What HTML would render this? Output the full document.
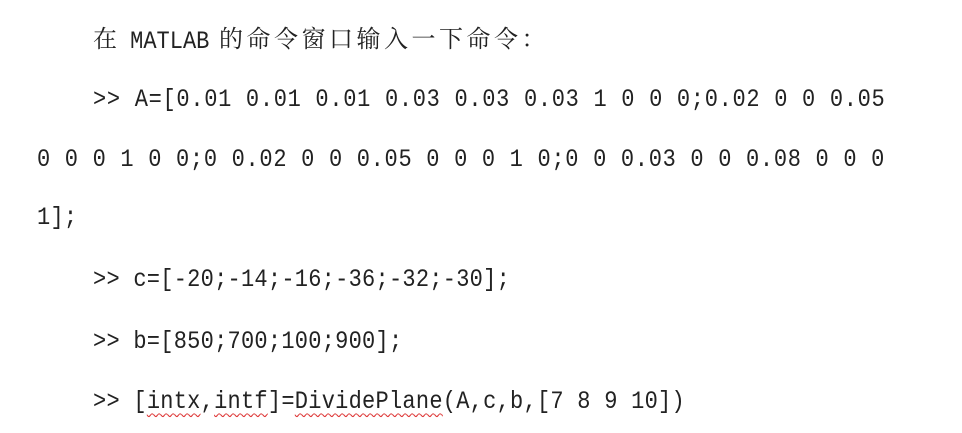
<!DOCTYPE html>
<html><head><meta charset="utf-8"><style>
body{margin:0;width:962px;height:433px;background:#fff;overflow:hidden;position:relative}
.l{position:absolute;white-space:pre;line-height:30px;color:#222;font-family:"Liberation Mono","Noto Serif CJK SC",monospace;font-size:22px;letter-spacing:0.25px;transform:scaleY(1.15);transform-origin:left center}
.cn{font-family:"Noto Serif CJK SC","Liberation Serif",serif;font-size:24px;letter-spacing:3.5px;transform:none}
.j{letter-spacing:0.7px}
.w{text-decoration:underline wavy #d33;text-decoration-thickness:1px;text-underline-offset:4px}
</style></head><body>
<div class="l cn" style="left:93px;top:22px">在 <span style="font-family:'Liberation Mono',monospace;font-size:22px;letter-spacing:0;display:inline-block;transform:scaleY(1.15)">MATLAB</span> 的命令窗口输入一下命令：</div>
<div class="l j" style="left:93px;top:85px">&gt;&gt; A=[0.01 0.01 0.01 0.03 0.03 0.03 1 0 0 0;0.02 0 0 0.05</div>
<div class="l j" style="left:37px;top:145px">0 0 0 1 0 0;0 0.02 0 0 0.05 0 0 0 1 0;0 0 0.03 0 0 0.08 0 0 0</div>
<div class="l" style="left:37px;top:203px">1];</div>
<div class="l" style="left:93px;top:265px">&gt;&gt; c=[-20;-14;-16;-36;-32;-30];</div>
<div class="l" style="left:93px;top:327px">&gt;&gt; b=[850;700;100;900];</div>
<div class="l" style="left:93px;top:387px">&gt;&gt; [<span class="w">intx</span>,<span class="w">intf</span>]=<span class="w">DividePlane</span>(A,c,b,[7 8 9 10])</div>
</body></html>
